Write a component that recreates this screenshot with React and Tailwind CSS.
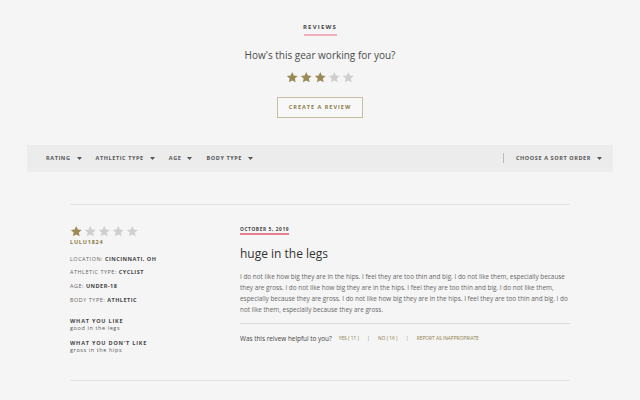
import React from "react";

const GOLD = "#9c8a55";

function Star({ filled, size = 13 }) {
  return (
    <svg width={size} height={size} viewBox="0 0 24 24">
      <path
        d="M12 1.8l3.1 6.9 7.4.7-5.6 5 1.7 7.4L12 18l-6.6 3.8 1.7-7.4-5.6-5 7.4-.7z"
        fill={filled ? GOLD : "#cfcfcf"}
      />
    </svg>
  );
}

function Stars({ n, size, gap }) {
  return (
    <div className={`flex ${gap}`}>
      {[0, 1, 2, 3, 4].map((i) => (
        <Star key={i} filled={i < n} size={size} />
      ))}
    </div>
  );
}

function Caret() {
  return (
    <svg width="5" height="3" viewBox="0 0 5 3" className="ml-[6px]">
      <path d="M0 0h5L2.5 3z" fill="#555" />
    </svg>
  );
}

function Filter({ label }) {
  return (
    <div className="flex items-center text-[5.5px] font-bold tracking-[0.6px] text-[#555]">
      {label}
      <Caret />
    </div>
  );
}

function Meta({ k, v }) {
  return (
    <div className="text-[5.5px] tracking-[0.5px] text-[#666] leading-none">
      {k}: <span className="font-bold text-[#444]">{v}</span>
    </div>
  );
}

export default function App() {
  const body =
    "I do not like how big they are in the hips. I feel they are too thin and big. I do not like them, especially because they are gross. I do not like how big they are in the hips. I feel they are too thin and big. I do not like them, especially because they are gross. I do not like how big they are in the hips. I feel they are too thin and big. I do not like them, especially because they are gross.";
  return (
    <div className="w-[640px] h-[400px] bg-[#f5f5f5] overflow-hidden font-['Open_Sans',sans-serif] text-[#444]">
      <div className="flex flex-col items-center pt-[24px]">
        <div className="text-[6px] font-bold tracking-[1.2px] text-[#444] leading-none">REVIEWS</div>
        <div className="w-[33px] h-[2px] bg-[#eeafbd] mt-[4px]" />
        <div className="text-[10px] text-[#4a4a4a] mt-[14px] leading-none">How's this gear working for you?</div>
        <div className="mt-[11px]">
          <Stars n={3} size={12.5} gap="gap-[1.5px]" />
        </div>
        <div className="mt-[13px] w-[86px] h-[21px] border border-[#c8bd9f] bg-[#f8f8f8] flex items-center justify-center text-[5.5px] font-bold tracking-[1px] text-[#8c7a48]">
          CREATE A REVIEW
        </div>
      </div>

      <div className="mx-[27px] mt-[27px] h-[27px] bg-[#ececec] flex items-center pl-[19px] pr-[11px]">
        <div className="flex items-center gap-[14px]">
          <Filter label="RATING" />
          <Filter label="ATHLETIC TYPE" />
          <Filter label="AGE" />
          <Filter label="BODY TYPE" />
        </div>
        <div className="ml-auto flex items-center">
          <div className="w-[1px] h-[10px] bg-[#bbb] mr-[12px]" />
          <Filter label="CHOOSE A SORT ORDER" />
        </div>
      </div>

      <div className="mx-[70px] mt-[32px] border-t border-[#e2e2e2] flex pt-[20px] pb-[26px]">
        <div className="w-[170px] shrink-0">
          <Stars n={1} size={12.5} gap="gap-[1.5px]" />
          <div className="mt-[3px] text-[5.5px] font-bold tracking-[0.8px] text-[#8c7a48] leading-none">LULU1824</div>
          <div className="mt-[11px] flex flex-col gap-[8.4px]">
            <Meta k="LOCATION" v="CINCINNATI, OH" />
            <Meta k="ATHLETIC TYPE" v="CYCLIST" />
            <Meta k="AGE" v="UNDER-18" />
            <Meta k="BODY TYPE" v="ATHLETIC" />
          </div>
          <div className="mt-[15px] text-[5.5px] font-bold tracking-[0.8px] text-[#444] leading-none">WHAT YOU LIKE</div>
          <div className="mt-[2px] text-[5.5px] tracking-[0.6px] text-[#555] leading-none">good in the legs</div>
          <div className="mt-[9px] text-[5.5px] font-bold tracking-[0.8px] text-[#444] leading-none">WHAT YOU DON'T LIKE</div>
          <div className="mt-[2px] text-[5.5px] tracking-[0.6px] text-[#555] leading-none">gross in the hips</div>
        </div>
        <div className="flex-1 min-w-0">
          <div className="flex mt-[2px]">
            <div>
              <div className="text-[4.8px] font-bold tracking-[0.6px] text-[#444] leading-none">OCTOBER 5, 2019</div>
              <div className="h-[1.5px] bg-[#e4808f] mt-[2px]" />
            </div>
          </div>
          <div className="mt-[13px] text-[12px] text-[#333] leading-none">huge in the legs</div>
          <div className="mt-[11px] text-[6.4px] leading-[11.2px] text-[#666]">{body}</div>
          <div className="mt-[7px] border-t border-[#dcdcdc] pt-[10px] flex items-center text-[6.4px] text-[#444]">
            <span>Was this reivew helpful to you?</span>
            <span className="ml-[7px] text-[4.8px] text-[#8c7a48]">YES ( 11 )</span>
            <span className="mx-[8px] text-[6px] text-[#999]">|</span>
            <span className="text-[4.8px] text-[#8c7a48]">NO ( 16 )</span>
            <span className="mx-[8px] text-[6px] text-[#999]">|</span>
            <span className="text-[4.8px] text-[#8c7a48]">REPORT AS INAPPROPRIATE</span>
          </div>
        </div>
      </div>
      <div className="mx-[70px] border-t border-[#e2e2e2]" />
    </div>
  );
}
